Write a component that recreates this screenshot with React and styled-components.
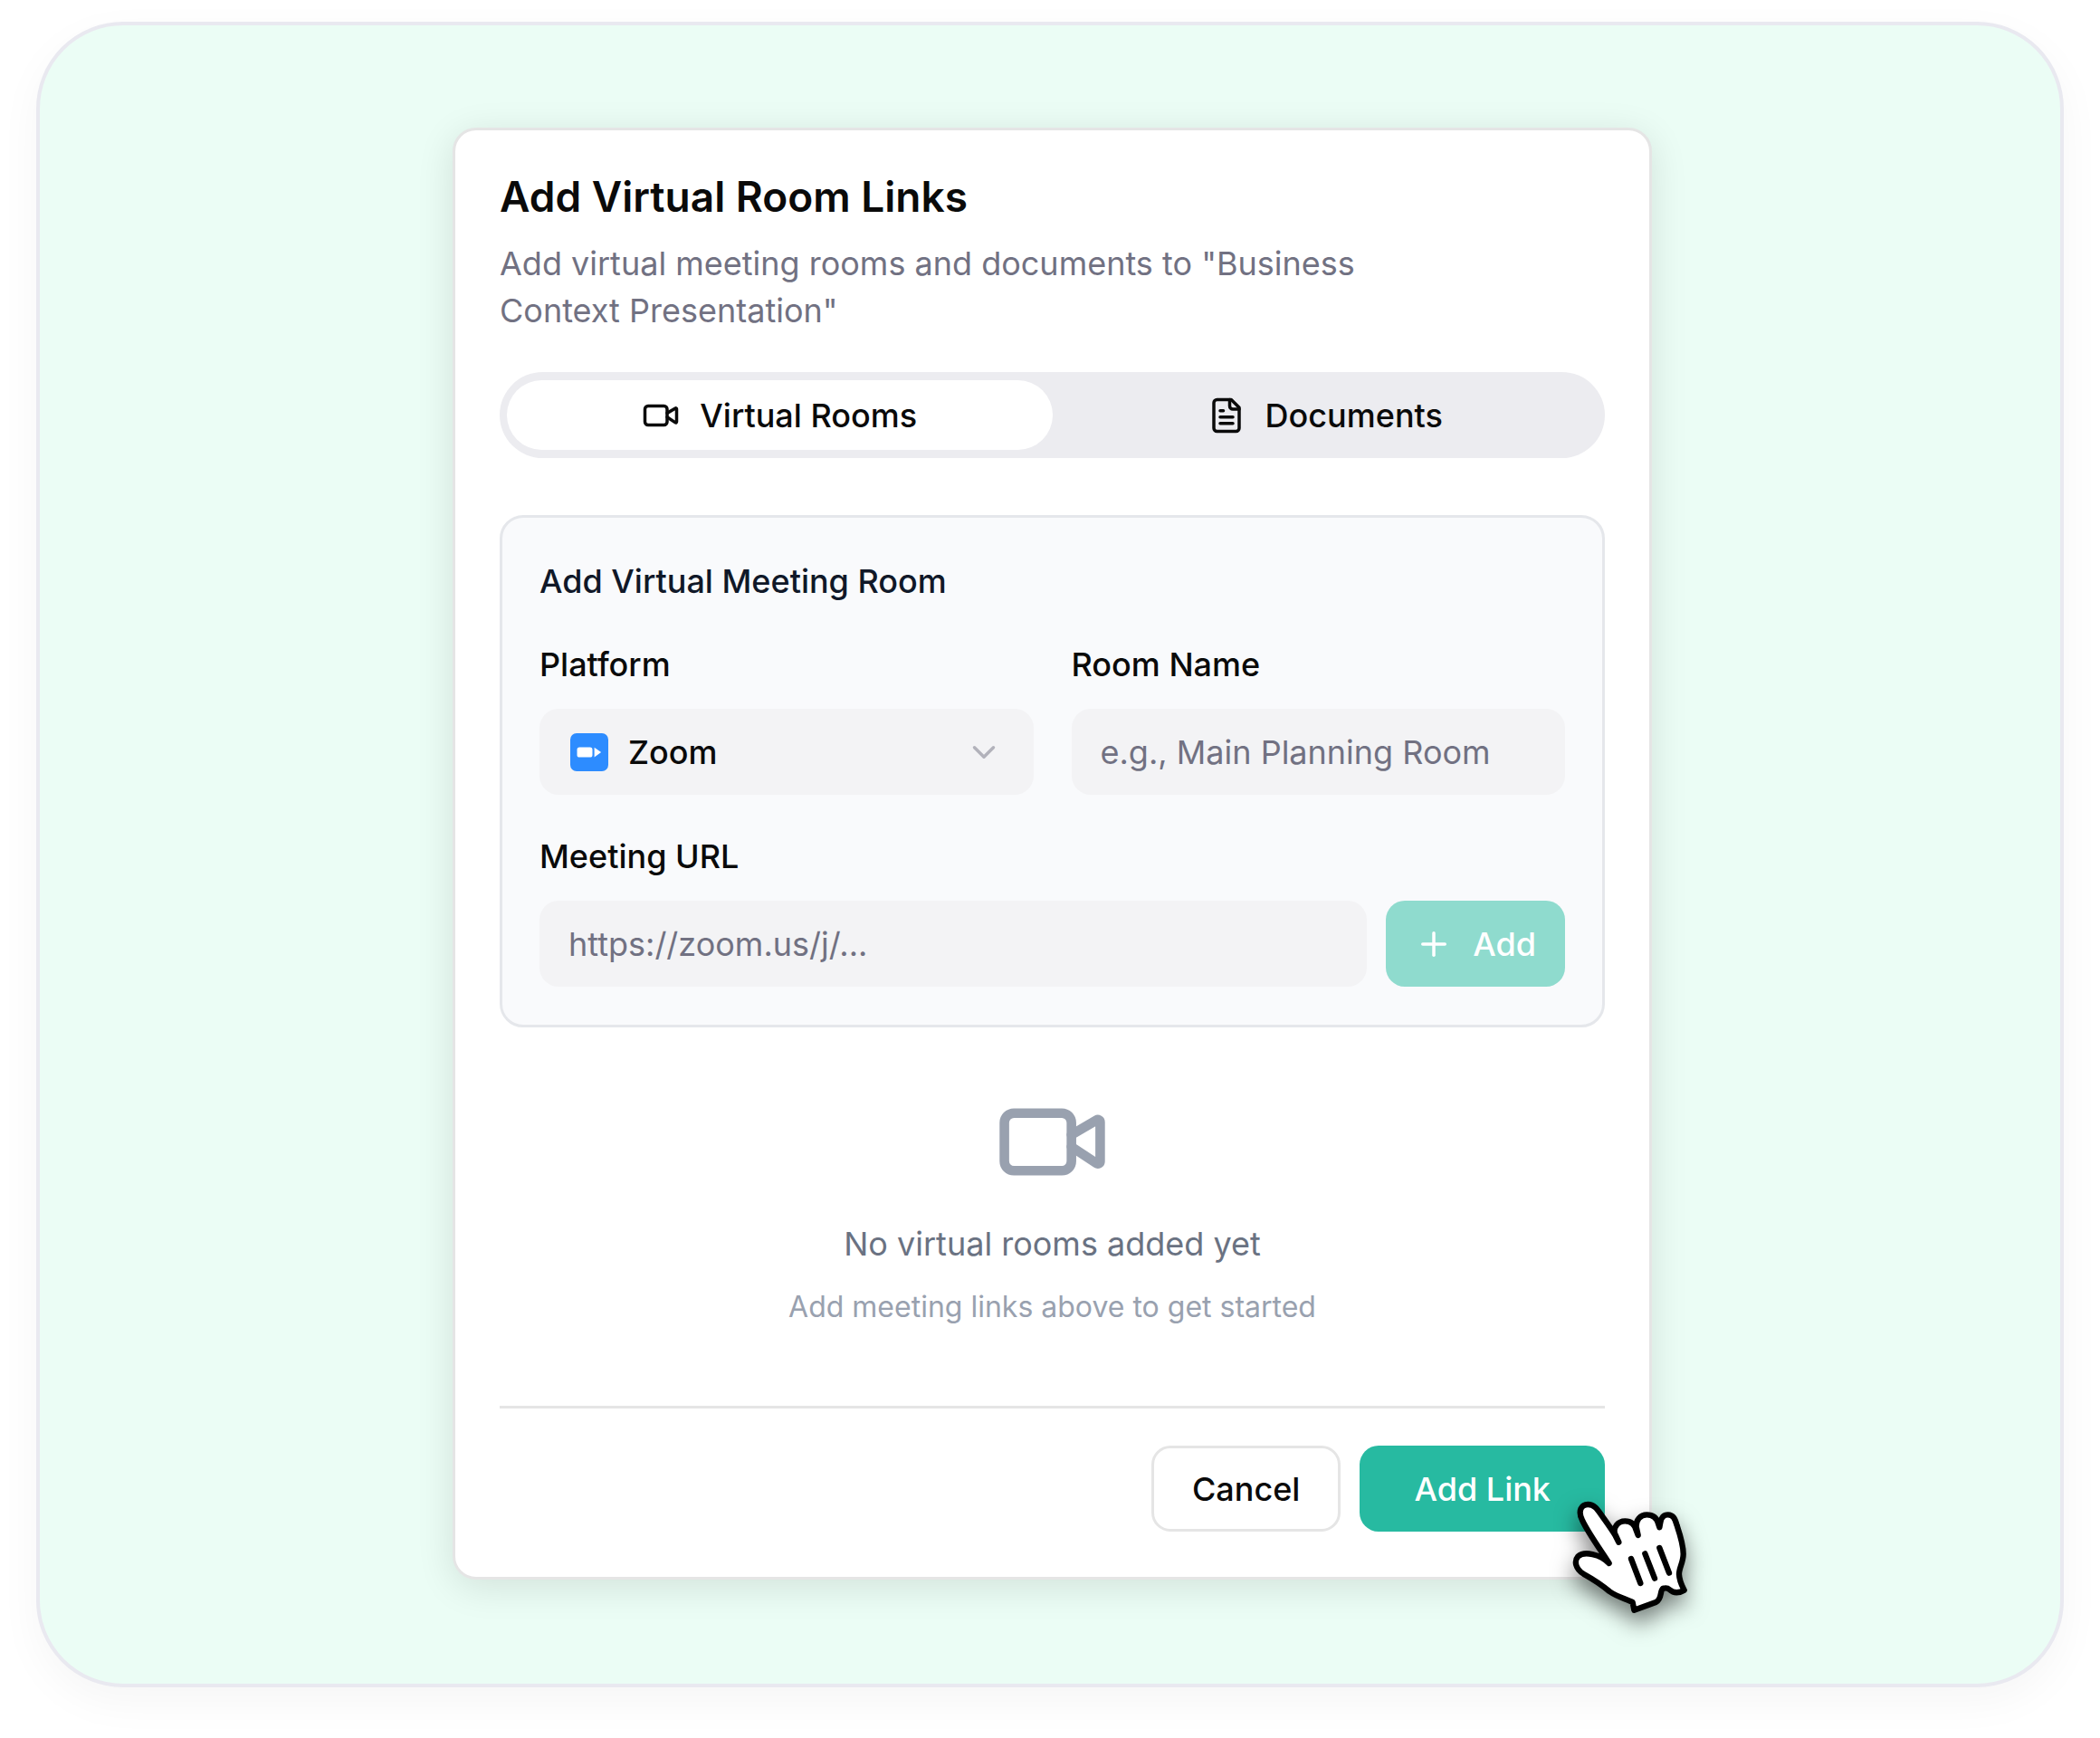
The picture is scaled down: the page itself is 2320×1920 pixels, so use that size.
import React, { useState } from 'react';
import styled, { createGlobalStyle } from 'styled-components'

const VideoIcon = (props) => (
  <svg viewBox="0 0 24 24" fill="none" stroke="currentColor" strokeWidth="2" strokeLinecap="round" strokeLinejoin="round" aria-hidden="true" {...props}>
    <path d="m16 13 5.223 3.482a.5.5 0 0 0 .777-.416V7.87a.5.5 0 0 0-.752-.432L16 10.5" />
    <rect x="2" y="6" width="14" height="12" rx="2" />
  </svg>
)

const FileIcon = (props) => (
  <svg viewBox="0 0 24 24" fill="none" stroke="currentColor" strokeWidth="2" strokeLinecap="round" strokeLinejoin="round" aria-hidden="true" {...props}>
    <path d="M15 2H6a2 2 0 0 0-2 2v16a2 2 0 0 0 2 2h12a2 2 0 0 0 2-2V7Z" />
    <path d="M14 2v4a2 2 0 0 0 2 2h4" />
    <path d="M10 9H8" />
    <path d="M16 13H8" />
    <path d="M16 17H8" />
  </svg>
)

const PlusIcon = (props) => (
  <svg viewBox="0 0 24 24" fill="none" stroke="currentColor" strokeWidth="2" strokeLinecap="round" aria-hidden="true" {...props}>
    <path d="M5 12h14" />
    <path d="M12 5v14" />
  </svg>
)

const ChevronIcon = (props) => (
  <svg viewBox="0 0 24 24" fill="none" stroke="currentColor" strokeWidth="2" strokeLinecap="round" strokeLinejoin="round" aria-hidden="true" {...props}>
    <path d="m6 9 6 6 6-6" />
  </svg>
)

const ZoomLogo = (props) => (
  <svg viewBox="0 0 24 24" aria-hidden="true" {...props}>
    <rect width="24" height="24" rx="4" fill="#2d8cff" />
    <rect x="4.3" y="8.9" width="9.7" height="6.3" rx="1.5" fill="#fff" />
    <path d="M15.2 9v6.1l4.3-3.05Z" fill="#fff" />
  </svg>
)

const HandIcon = (props) => (
  <svg viewBox="99 99 420 420" stroke="#000" strokeWidth="19" strokeLinecap="round" strokeLinejoin="round" aria-hidden="true" {...props}>
    <path
      fill="#fff"
      d="M233 321 C214 290 162 218 144 178 C128 146 142 126 163 126 C184 126 194 142 209 163
        C226 187 240 206 252 226 L265 251 L252 222 C246 202 262 181 286 181
        C308 181 319 196 323 212 L329 228 L323 200 C322 178 336 160 358 160
        C382 160 392 174 396 190 L400 202 L403 186 C405 170 414 160 428 160
        C446 160 452 174 458 196 C468 226 479 258 479 290 C479 318 464 338 465 358
        C466 380 474 394 482 410 C462 422 446 420 433 408 C424 400 418 404 412 404
        C400 412 410 438 388 450 L316 476 L311 450 C294 440 262 434 234 414
        C206 390 184 376 148 356 C122 340 116 314 130 298 C150 280 204 290 233 321 Z"
    />
    <path d="M306 306 L337 387" />
    <path d="M352 289 L384 371" />
    <path d="M400 270 L432 353" />
  </svg>
)

const TABS = [
  { id: 'rooms', label: 'Virtual Rooms', Icon: VideoIcon },
  { id: 'documents', label: 'Documents', Icon: FileIcon },
]

const App = () => {
  const [ tab, setTab ] = useState('rooms')
  const [ platform, setPlatform ] = useState('zoom')
  const [ roomName, setRoomName ] = useState('')
  const [ url, setUrl ] = useState('')

  return (
    <>
      <GlobalStyle />
      <Stage>
        <Dialog role="dialog" aria-labelledby="dialog-title">
          <Title id="dialog-title">Add Virtual Room Links</Title>
          <Description>
            Add virtual meeting rooms and documents to "Business Context Presentation"
          </Description>

          <TabList role="tablist">
            {TABS.map(({ id, label, Icon }) => (
              <Tab key={id} type="button" role="tab" aria-selected={tab === id} $active={tab === id} onClick={() => setTab(id)}>
                <SmallIcon as={Icon} />
                {label}
              </Tab>
            ))}
          </TabList>

          <Card>
            <CardTitle>Add Virtual Meeting Room</CardTitle>
            <Fields>
              <TwoColumns>
                <Field>
                  <Label htmlFor="platform">Platform</Label>
                  <SelectBox>
                    <Select id="platform" value={platform} onChange={(e) => setPlatform(e.target.value)}>
                      <option value="zoom">Zoom</option>
                    </Select>
                    <PlatformLogo />
                    <SelectArrow />
                  </SelectBox>
                </Field>
                <Field>
                  <Label htmlFor="room-name">Room Name</Label>
                  <Input
                    id="room-name"
                    placeholder="e.g., Main Planning Room"
                    value={roomName}
                    onChange={(e) => setRoomName(e.target.value)}
                  />
                </Field>
              </TwoColumns>
              <Field>
                <Label htmlFor="meeting-url">Meeting URL</Label>
                <UrlRow>
                  <Input
                    id="meeting-url"
                    placeholder="https://zoom.us/j/..."
                    value={url}
                    onChange={(e) => setUrl(e.target.value)}
                  />
                  <AddButton type="button" disabled={!url}>
                    <SmallIcon as={PlusIcon} />
                    Add
                  </AddButton>
                </UrlRow>
              </Field>
            </Fields>
          </Card>

          <Empty>
            <LargeIcon />
            <EmptyTitle>No virtual rooms added yet</EmptyTitle>
            <EmptyHint>Add meeting links above to get started</EmptyHint>
          </Empty>

          <Footer>
            <CancelButton type="button">Cancel</CancelButton>
            <SubmitButton type="button">Add Link</SubmitButton>
          </Footer>

          <Pointer />
        </Dialog>
      </Stage>
    </>
  )
}

const GlobalStyle = createGlobalStyle`
  * {
    box-sizing: border-box;
  }

  body {
    margin: 0;
    background-color: #fff;
    color: #0a0a0a;
    font-family: Inter, "Liberation Sans", sans-serif;
    font-size: 36px;
    line-height: 56px;
    -webkit-font-smoothing: antialiased;
  }

  h2, h3, p {
    margin: 0;
  }

  button, input, select {
    font: inherit;
    color: inherit;
  }
`;

const Stage = styled.main`
  margin: 24px 40px 56px;
  padding: 113px 451px 115px 456px;
  background-color: #ebfdf5;
  border: 4px solid #e9e9f0;
  border-radius: 96px;
  box-shadow: 0 16px 48px rgba(0, 0, 0, 0.04);
`;

const Dialog = styled.section`
  position: relative;
  display: flex;
  flex-direction: column;
  padding: 49px 49px 50px;
  background-color: #fff;
  border: 3px solid #e5e5e5;
  border-radius: 26px;
  box-shadow: 0 8px 42px rgba(0, 0, 0, 0.11);
`;

const Title = styled.h2`
  font-size: 46px;
  line-height: 48px;
  font-weight: 600;
`;

const Description = styled.p`
  max-width: 1040px;
  margin-top: 24px;
  line-height: 52px;
  color: #717182;
`;

const TabList = styled.div`
  display: grid;
  grid-template-columns: 1fr 1fr;
  height: 95px;
  margin-top: 42px;
  padding: 9px 8px;
  background-color: #ececf0;
  border-radius: 48px;
`;

const Tab = styled.button`
  display: flex;
  align-items: center;
  justify-content: center;
  gap: 22px;
  padding: 0;
  border: none;
  border-radius: 40px;
  background-color: ${({ $active }) => ($active ? '#fff' : 'transparent')};
  font-weight: 500;
`;

const SmallIcon = styled.svg`
  flex: none;
  width: 42px;
  height: 42px;
`;

const Card = styled.div`
  margin-top: 63px;
  padding: 42px 41px;
  background-color: #f9fafc;
  border: 3px solid #e5e7eb;
  border-radius: 26px;
`;

const CardTitle = styled.h3`
  margin-bottom: 36px;
  font-size: 36px;
  font-weight: 500;
  color: #101828;
`;

const Fields = styled.div`
  display: flex;
  flex-direction: column;
  gap: 40px;
`;

const TwoColumns = styled.div`
  display: grid;
  grid-template-columns: 1fr 1fr;
  gap: 42px;
`;

const Field = styled.div`
  display: flex;
  flex-direction: column;
  gap: 21px;
  min-width: 0;
`;

const Label = styled.label`
  font-weight: 500;
`;

const Input = styled.input`
  flex: 1 1 auto;
  width: 100%;
  min-width: 0;
  height: 95px;
  padding: 0 32px;
  border: none;
  border-radius: 21px;
  background-color: #f3f3f5;

  &::placeholder {
    color: #717182;
    opacity: 1;
  }
`;

const SelectBox = styled.div`
  position: relative;
  display: flex;
`;

const Select = styled.select`
  width: 100%;
  height: 95px;
  padding: 0 98px;
  appearance: none;
  border: none;
  border-radius: 21px;
  background-color: #f3f3f5;
  font-weight: 500;
`;

const PlatformLogo = styled(ZoomLogo)`
  position: absolute;
  top: 27px;
  left: 34px;
  width: 42px;
  height: 42px;
  pointer-events: none;
`;

const SelectArrow = styled(ChevronIcon)`
  position: absolute;
  top: 27px;
  right: 34px;
  width: 42px;
  height: 42px;
  color: #b2b2bb;
  pointer-events: none;
`;

const UrlRow = styled.div`
  display: flex;
  gap: 21px;
`;

const Button = styled.button`
  display: flex;
  flex: none;
  align-items: center;
  justify-content: center;
  height: 95px;
  border: none;
  border-radius: 21px;
  font-weight: 500;
`;

const AddButton = styled(Button)`
  gap: 22px;
  padding: 0 32px;
  background-color: #27baa1;
  color: #fff;

  &:disabled {
    background-color: #8fdbce;
  }
`;

const Empty = styled.div`
  display: flex;
  flex-direction: column;
  align-items: center;
  gap: 21px;
  padding: 63px 0 88px;
  text-align: center;
`;

const LargeIcon = styled(VideoIcon)`
  width: 127px;
  height: 127px;
  color: #99a1af;
`;

const EmptyTitle = styled.p`
  color: #6a7282;
`;

const EmptyHint = styled.p`
  font-size: 32px;
  line-height: 42px;
  color: #99a1af;
`;

const Footer = styled.div`
  display: flex;
  justify-content: flex-end;
  gap: 21px;
  padding-top: 41px;
  border-top: 3px solid #e5e5e5;
`;

const CancelButton = styled(Button)`
  padding: 0 42px;
  border: 3px solid #e5e5e5;
  background-color: #fff;
`;

const SubmitButton = styled(Button)`
  padding: 0 60px;
  background-color: #27baa1;
  color: #fff;
`;

const Pointer = styled(HandIcon)`
  position: absolute;
  right: -51px;
  bottom: -51px;
  width: 140px;
  height: 140px;
  overflow: visible;
  pointer-events: none;
  filter: drop-shadow(0 12px 12px rgba(0, 0, 0, 0.5));
`;

export default App;
